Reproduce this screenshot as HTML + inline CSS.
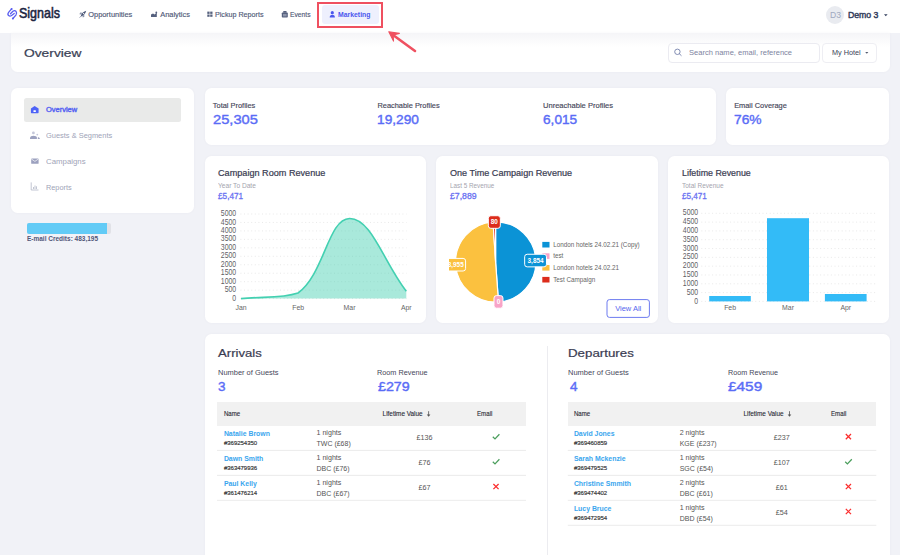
<!DOCTYPE html>
<html><head><meta charset="utf-8"><title>Signals - Marketing Overview</title>
<style>
*{box-sizing:border-box;margin:0;padding:0}
html,body{width:900px;height:555px;overflow:hidden}
body{background:#f1f2f7;font-family:"Liberation Sans",sans-serif;position:relative}
.a{position:absolute}
.t{position:absolute;white-space:nowrap;line-height:1;transform-origin:0 0}
.card{position:absolute;background:#fff;border-radius:6.5px;box-shadow:0 0 3px rgba(40,40,80,0.035)}
svg{position:absolute;overflow:visible}
</style></head><body>

<div class="a" style="left:0;top:0;width:900px;height:33px;background:#fff"></div>
<div class="card" style="left:11px;top:33px;width:879px;height:39px;border-radius:0 0 6.5px 6.5px;background:linear-gradient(#f5f5f8,#fff 14px)"></div>
<div class="a" style="left:668px;top:42.5px;width:151.5px;height:20px;border:1px solid #ebebf1;border-radius:4px;background:#fff"></div>
<div class="a" style="left:822px;top:42.5px;width:54.5px;height:20px;border:1px solid #eeeef3;border-radius:4px;background:#fff"></div>
<div class="a" style="left:317px;top:2px;width:66px;height:26px;border:2px solid #ef5060"></div>
<div class="a" style="left:826px;top:6px;width:18px;height:18px;border-radius:50%;background:#e9ebf0"></div>
<div class="a" style="left:322px;top:5.3px;width:57px;height:18.7px;background:#eef0fd;border-radius:3px"></div>

<div class="card" style="left:11px;top:88px;width:183px;height:125px"></div>
<div class="a" style="left:24px;top:98.3px;width:157px;height:23.4px;background:#e9eae9;border-radius:2.5px"></div>
<div class="a" style="left:27px;top:223.4px;width:83.7px;height:10.2px;background:#e1e2e7;border-radius:2px"></div>
<div class="a" style="left:27px;top:223.4px;width:80.3px;height:10.2px;background:#62cbf6;border-radius:2px 0 0 2px"></div>

<div class="card" style="left:205px;top:88px;width:510.6px;height:57.3px"></div>
<div class="card" style="left:726px;top:88px;width:163px;height:57.3px"></div>
<div class="card" style="left:205px;top:156px;width:221px;height:167px"></div>
<div class="card" style="left:436.2px;top:156px;width:221.8px;height:167px"></div>
<div class="card" style="left:668px;top:156px;width:221px;height:167px"></div>
<div class="card" style="left:205px;top:333.5px;width:685px;height:240px"></div>
<div class="a" style="left:546.5px;top:346px;width:1px;height:220px;background:#ececf0"></div>

<svg style="left:0;top:0" width="900" height="555" viewBox="0 0 900 555" font-family="Liberation Sans"><line x1="240.4" y1="214.00" x2="406.5" y2="214.00" stroke="#e3e3e3" stroke-width="0.8" stroke-dasharray="1 2.6"/><line x1="240.4" y1="222.46" x2="406.5" y2="222.46" stroke="#e3e3e3" stroke-width="0.8" stroke-dasharray="1 2.6"/><line x1="240.4" y1="230.92" x2="406.5" y2="230.92" stroke="#e3e3e3" stroke-width="0.8" stroke-dasharray="1 2.6"/><line x1="240.4" y1="239.38" x2="406.5" y2="239.38" stroke="#e3e3e3" stroke-width="0.8" stroke-dasharray="1 2.6"/><line x1="240.4" y1="247.84" x2="406.5" y2="247.84" stroke="#e3e3e3" stroke-width="0.8" stroke-dasharray="1 2.6"/><line x1="240.4" y1="256.30" x2="406.5" y2="256.30" stroke="#e3e3e3" stroke-width="0.8" stroke-dasharray="1 2.6"/><line x1="240.4" y1="264.76" x2="406.5" y2="264.76" stroke="#e3e3e3" stroke-width="0.8" stroke-dasharray="1 2.6"/><line x1="240.4" y1="273.22" x2="406.5" y2="273.22" stroke="#e3e3e3" stroke-width="0.8" stroke-dasharray="1 2.6"/><line x1="240.4" y1="281.68" x2="406.5" y2="281.68" stroke="#e3e3e3" stroke-width="0.8" stroke-dasharray="1 2.6"/><line x1="240.4" y1="290.14" x2="406.5" y2="290.14" stroke="#e3e3e3" stroke-width="0.8" stroke-dasharray="1 2.6"/><line x1="240.4" y1="298.60" x2="406.5" y2="298.60" stroke="#e3e3e3" stroke-width="0.8" stroke-dasharray="1 2.6"/><text x="236.2" y="216.10" text-anchor="end" font-size="8.5" fill="#5f5f66" textLength="15.40" lengthAdjust="spacingAndGlyphs">5000</text><text x="236.2" y="224.56" text-anchor="end" font-size="8.5" fill="#5f5f66" textLength="15.40" lengthAdjust="spacingAndGlyphs">4500</text><text x="236.2" y="233.02" text-anchor="end" font-size="8.5" fill="#5f5f66" textLength="15.40" lengthAdjust="spacingAndGlyphs">4000</text><text x="236.2" y="241.48" text-anchor="end" font-size="8.5" fill="#5f5f66" textLength="15.40" lengthAdjust="spacingAndGlyphs">3500</text><text x="236.2" y="249.94" text-anchor="end" font-size="8.5" fill="#5f5f66" textLength="15.40" lengthAdjust="spacingAndGlyphs">3000</text><text x="236.2" y="258.40" text-anchor="end" font-size="8.5" fill="#5f5f66" textLength="15.40" lengthAdjust="spacingAndGlyphs">2500</text><text x="236.2" y="266.86" text-anchor="end" font-size="8.5" fill="#5f5f66" textLength="15.40" lengthAdjust="spacingAndGlyphs">2000</text><text x="236.2" y="275.32" text-anchor="end" font-size="8.5" fill="#5f5f66" textLength="15.40" lengthAdjust="spacingAndGlyphs">1500</text><text x="236.2" y="283.78" text-anchor="end" font-size="8.5" fill="#5f5f66" textLength="15.40" lengthAdjust="spacingAndGlyphs">1000</text><text x="236.2" y="292.24" text-anchor="end" font-size="8.5" fill="#5f5f66" textLength="11.55" lengthAdjust="spacingAndGlyphs">500</text><text x="236.2" y="300.70" text-anchor="end" font-size="8.5" fill="#5f5f66" textLength="3.85" lengthAdjust="spacingAndGlyphs">0</text><path d="M241,298.6 C263.8,296.4 281.2,298.6 298,293 C324.6,273.4 328.1,218.9 349.5,218.5 C371.4,218.1 383.6,262.1 406.3,291.2 L406.3,298.6 L241,298.6 Z" fill="rgba(67,208,177,0.46)"/><path d="M241,298.6 C263.8,296.4 281.2,298.6 298,293 C324.6,273.4 328.1,218.9 349.5,218.5 C371.4,218.1 383.6,262.1 406.3,291.2" fill="none" stroke="#43d0b1" stroke-width="1.6"/><text x="241" y="309.8" text-anchor="middle" font-size="6.9" fill="#666">Jan</text><text x="298.2" y="309.8" text-anchor="middle" font-size="6.9" fill="#666">Feb</text><text x="349.5" y="309.8" text-anchor="middle" font-size="6.9" fill="#666">Mar</text><text x="406.3" y="309.8" text-anchor="middle" font-size="6.9" fill="#666">Apr</text><line x1="701.3" y1="213.30" x2="875.5" y2="213.30" stroke="#e3e3e3" stroke-width="0.8" stroke-dasharray="1 2.6"/><line x1="701.3" y1="222.11" x2="875.5" y2="222.11" stroke="#e3e3e3" stroke-width="0.8" stroke-dasharray="1 2.6"/><line x1="701.3" y1="230.92" x2="875.5" y2="230.92" stroke="#e3e3e3" stroke-width="0.8" stroke-dasharray="1 2.6"/><line x1="701.3" y1="239.73" x2="875.5" y2="239.73" stroke="#e3e3e3" stroke-width="0.8" stroke-dasharray="1 2.6"/><line x1="701.3" y1="248.54" x2="875.5" y2="248.54" stroke="#e3e3e3" stroke-width="0.8" stroke-dasharray="1 2.6"/><line x1="701.3" y1="257.35" x2="875.5" y2="257.35" stroke="#e3e3e3" stroke-width="0.8" stroke-dasharray="1 2.6"/><line x1="701.3" y1="266.16" x2="875.5" y2="266.16" stroke="#e3e3e3" stroke-width="0.8" stroke-dasharray="1 2.6"/><line x1="701.3" y1="274.97" x2="875.5" y2="274.97" stroke="#e3e3e3" stroke-width="0.8" stroke-dasharray="1 2.6"/><line x1="701.3" y1="283.78" x2="875.5" y2="283.78" stroke="#e3e3e3" stroke-width="0.8" stroke-dasharray="1 2.6"/><line x1="701.3" y1="292.59" x2="875.5" y2="292.59" stroke="#e3e3e3" stroke-width="0.8" stroke-dasharray="1 2.6"/><line x1="701.3" y1="301.40" x2="875.5" y2="301.40" stroke="#e3e3e3" stroke-width="0.8" stroke-dasharray="1 2.6"/><text x="698.2" y="215.40" text-anchor="end" font-size="8.5" fill="#5f5f66" textLength="15.40" lengthAdjust="spacingAndGlyphs">5000</text><text x="698.2" y="224.21" text-anchor="end" font-size="8.5" fill="#5f5f66" textLength="15.40" lengthAdjust="spacingAndGlyphs">4500</text><text x="698.2" y="233.02" text-anchor="end" font-size="8.5" fill="#5f5f66" textLength="15.40" lengthAdjust="spacingAndGlyphs">4000</text><text x="698.2" y="241.83" text-anchor="end" font-size="8.5" fill="#5f5f66" textLength="15.40" lengthAdjust="spacingAndGlyphs">3500</text><text x="698.2" y="250.64" text-anchor="end" font-size="8.5" fill="#5f5f66" textLength="15.40" lengthAdjust="spacingAndGlyphs">3000</text><text x="698.2" y="259.45" text-anchor="end" font-size="8.5" fill="#5f5f66" textLength="15.40" lengthAdjust="spacingAndGlyphs">2500</text><text x="698.2" y="268.26" text-anchor="end" font-size="8.5" fill="#5f5f66" textLength="15.40" lengthAdjust="spacingAndGlyphs">2000</text><text x="698.2" y="277.07" text-anchor="end" font-size="8.5" fill="#5f5f66" textLength="15.40" lengthAdjust="spacingAndGlyphs">1500</text><text x="698.2" y="285.88" text-anchor="end" font-size="8.5" fill="#5f5f66" textLength="15.40" lengthAdjust="spacingAndGlyphs">1000</text><text x="698.2" y="294.69" text-anchor="end" font-size="8.5" fill="#5f5f66" textLength="11.55" lengthAdjust="spacingAndGlyphs">500</text><text x="698.2" y="303.50" text-anchor="end" font-size="8.5" fill="#5f5f66" textLength="3.85" lengthAdjust="spacingAndGlyphs">0</text><rect x="709.2" y="296" width="41.6" height="5.4" fill="#33bbf7"/><rect x="767" y="218.2" width="42.0" height="83.2" fill="#33bbf7"/><rect x="824.9" y="294" width="41.7" height="7.4" fill="#33bbf7"/><text x="730.1" y="309.8" text-anchor="middle" font-size="6.9" fill="#666">Feb</text><text x="788" y="309.8" text-anchor="middle" font-size="6.9" fill="#666">Mar</text><text x="845.8" y="309.8" text-anchor="middle" font-size="6.9" fill="#666">Apr</text><path d="M495.6,262.0 L495.60,221.80 A40.2,40.2 0 0 1 498.50,302.10 Z" fill="#0b93d6" stroke="#fff" stroke-width="1.2" stroke-linejoin="round"/><path d="M495.6,262.0 L498.50,302.10 A40.2,40.2 0 1 1 493.04,221.88 Z" fill="#fbc13f" stroke="#fff" stroke-width="1.2" stroke-linejoin="round"/><path d="M495.6,262.0 L493.04,221.88 A40.2,40.2 0 0 1 495.60,221.80 Z" fill="#dc2c1b" stroke="#fff" stroke-width="1.2" stroke-linejoin="round"/><rect x="542.3" y="241.9" width="7.2" height="5.6" fill="#0b93d6"/><text x="553.2" y="247.0" font-size="6.3" fill="#666">London hotels 24.02.21 (Copy)</text><rect x="542.3" y="253.3" width="7.2" height="5.6" fill="#f8a3c7"/><text x="553.2" y="258.4" font-size="6.3" fill="#666">test</text><rect x="542.3" y="265.0" width="7.2" height="5.6" fill="#fbc13f"/><text x="553.2" y="270.1" font-size="6.3" fill="#666">London hotels 24.02.21</text><rect x="542.3" y="276.9" width="7.2" height="5.6" fill="#dc2c1b"/><text x="553.2" y="282.0" font-size="6.3" fill="#666">Test Campaign</text><defs><clipPath id="pc"><rect x="449" y="150" width="220" height="200"/></clipPath></defs><g clip-path="url(#pc)"><rect x="524.67" y="254.26" width="21.8" height="12.6" rx="2.5" fill="#0b93d6" stroke="#fff" stroke-width="1"/><text x="535.57" y="262.86" text-anchor="middle" font-size="6.4" font-weight="bold" fill="#fff">3,854</text><rect x="493.98" y="295.60" width="9" height="12.6" rx="2.5" fill="#f8a3c7" stroke="#fff" stroke-width="1"/><text x="498.48" y="304.20" text-anchor="middle" font-size="6.4" font-weight="bold" fill="#fff">0</text><rect x="445.79" y="258.41" width="19.8" height="12.6" rx="2.5" fill="#fbc13f" stroke="#fff" stroke-width="1"/><text x="455.69" y="267.01" text-anchor="middle" font-size="6.4" font-weight="bold" fill="#fff">3,955</text><rect x="488.33" y="215.72" width="12" height="12.6" rx="2.5" fill="#dc2c1b" stroke="#fff" stroke-width="1"/><text x="494.33" y="224.32" text-anchor="middle" font-size="6.4" font-weight="bold" fill="#fff">80</text></g><rect x="607" y="299.6" width="42.4" height="17.8" rx="2.5" fill="#fff" stroke="#6d7bf0" stroke-width="1"/><text x="628.2" y="311" text-anchor="middle" font-size="7.5" fill="#5565ee">View All</text></svg>
<div class="a" style="left:217px;top:402.2px;width:309px;height:23.6px;background:#f1f1f1"></div><svg style="left:0;top:0" width="900" height="555" viewBox="0 0 900 555" font-family="Liberation Sans"><text x="223.9" y="415.8" font-size="6.7" fill="#2a2a35" stroke="#2a2a35" stroke-width="0.12" lengthAdjust="spacingAndGlyphs" textLength="16.3">Name</text><text x="382.6" y="415.8" font-size="6.7" fill="#2a2a35" stroke="#2a2a35" stroke-width="0.12" lengthAdjust="spacingAndGlyphs" textLength="40">Lifetime Value</text><path d="M428.6 411.2 L428.6 416" stroke="#555" stroke-width="0.8" fill="none"/><path d="M426.8 414.4 L428.6 416.8 L430.40000000000003 414.4 Z" fill="#555"/><text x="477" y="415.8" font-size="6.7" fill="#2a2a35" stroke="#2a2a35" stroke-width="0.12" lengthAdjust="spacingAndGlyphs" textLength="15.4">Email</text><line x1="217" y1="450.40" x2="526" y2="450.40" stroke="#e6e6e6" stroke-width="0.8"/><text x="223.9" y="436.10" font-size="6.9" font-weight="bold" fill="#3aa6ee">Natalie Brown</text><text x="223.9" y="445.00" font-size="6.1" fill="#333" stroke="#333" stroke-width="0.16" textLength="33.3" lengthAdjust="spacingAndGlyphs">#369254350</text><text x="316.5" y="435.10" font-size="7.1" fill="#555">1 nights</text><text x="316.5" y="445.60" font-size="7.0" fill="#555">TWC (£68)</text><text x="424.6" y="440.20" text-anchor="middle" font-size="7.2" fill="#555">£136</text><path d="M492.8 436.8 L495 438.90000000000003 L499.4 434.3" stroke="#4a9e5c" stroke-width="1.25" fill="none"/><line x1="217" y1="475.37" x2="526" y2="475.37" stroke="#e6e6e6" stroke-width="0.8"/><text x="223.9" y="461.07" font-size="6.9" font-weight="bold" fill="#3aa6ee">Dawn Smith</text><text x="223.9" y="469.97" font-size="6.1" fill="#333" stroke="#333" stroke-width="0.16" textLength="33.3" lengthAdjust="spacingAndGlyphs">#363479936</text><text x="316.5" y="460.07" font-size="7.1" fill="#555">1 nights</text><text x="316.5" y="470.57" font-size="7.0" fill="#555">DBC (£76)</text><text x="424.6" y="465.17" text-anchor="middle" font-size="7.2" fill="#555">£76</text><path d="M492.8 461.77 L495 463.87 L499.4 459.27" stroke="#4a9e5c" stroke-width="1.25" fill="none"/><line x1="217" y1="500.34" x2="526" y2="500.34" stroke="#e6e6e6" stroke-width="0.8"/><text x="223.9" y="486.04" font-size="6.9" font-weight="bold" fill="#3aa6ee">Paul Kelly</text><text x="223.9" y="494.94" font-size="6.1" fill="#333" stroke="#333" stroke-width="0.16" textLength="33.3" lengthAdjust="spacingAndGlyphs">#361476214</text><text x="316.5" y="485.04" font-size="7.1" fill="#555">1 nights</text><text x="316.5" y="495.54" font-size="7.0" fill="#555">DBC (£67)</text><text x="424.6" y="490.14" text-anchor="middle" font-size="7.2" fill="#555">£67</text><path d="M493.4 483.94 L498.6 489.14000000000004 M498.6 483.94 L493.4 489.14000000000004" stroke="#fb2d2d" stroke-width="1.25" fill="none"/></svg><div class="a" style="left:567.8px;top:402.2px;width:308.5px;height:23.6px;background:#f1f1f1"></div><svg style="left:0;top:0" width="900" height="555" viewBox="0 0 900 555" font-family="Liberation Sans"><text x="573.9" y="415.8" font-size="6.7" fill="#2a2a35" stroke="#2a2a35" stroke-width="0.12" lengthAdjust="spacingAndGlyphs" textLength="16.3">Name</text><text x="743.5" y="415.8" font-size="6.7" fill="#2a2a35" stroke="#2a2a35" stroke-width="0.12" lengthAdjust="spacingAndGlyphs" textLength="40">Lifetime Value</text><path d="M789.5 411.2 L789.5 416" stroke="#555" stroke-width="0.8" fill="none"/><path d="M787.7 414.4 L789.5 416.8 L791.3 414.4 Z" fill="#555"/><text x="831" y="415.8" font-size="6.7" fill="#2a2a35" stroke="#2a2a35" stroke-width="0.12" lengthAdjust="spacingAndGlyphs" textLength="15.4">Email</text><line x1="567.8" y1="450.40" x2="876.3" y2="450.40" stroke="#e6e6e6" stroke-width="0.8"/><text x="573.9" y="436.10" font-size="6.9" font-weight="bold" fill="#3aa6ee">David Jones</text><text x="573.9" y="445.00" font-size="6.1" fill="#333" stroke="#333" stroke-width="0.16" textLength="33.3" lengthAdjust="spacingAndGlyphs">#369460859</text><text x="679.7" y="435.10" font-size="7.1" fill="#555">2 nights</text><text x="679.7" y="445.60" font-size="7.0" fill="#555">KGE (£237)</text><text x="781.8" y="440.20" text-anchor="middle" font-size="7.2" fill="#555">£237</text><path d="M845.8 434.0 L851.0 439.20000000000005 M851.0 434.0 L845.8 439.20000000000005" stroke="#fb2d2d" stroke-width="1.25" fill="none"/><line x1="567.8" y1="475.37" x2="876.3" y2="475.37" stroke="#e6e6e6" stroke-width="0.8"/><text x="573.9" y="461.07" font-size="6.9" font-weight="bold" fill="#3aa6ee">Sarah Mckenzie</text><text x="573.9" y="469.97" font-size="6.1" fill="#333" stroke="#333" stroke-width="0.16" textLength="33.3" lengthAdjust="spacingAndGlyphs">#369479525</text><text x="679.7" y="460.07" font-size="7.1" fill="#555">1 nights</text><text x="679.7" y="470.57" font-size="7.0" fill="#555">SGC (£54)</text><text x="781.8" y="465.17" text-anchor="middle" font-size="7.2" fill="#555">£107</text><path d="M845.1999999999999 461.77 L847.4 463.87 L851.8 459.27" stroke="#4a9e5c" stroke-width="1.25" fill="none"/><line x1="567.8" y1="500.34" x2="876.3" y2="500.34" stroke="#e6e6e6" stroke-width="0.8"/><text x="573.9" y="486.04" font-size="6.9" font-weight="bold" fill="#3aa6ee">Christine Smmith</text><text x="573.9" y="494.94" font-size="6.1" fill="#333" stroke="#333" stroke-width="0.16" textLength="33.3" lengthAdjust="spacingAndGlyphs">#369474402</text><text x="679.7" y="485.04" font-size="7.1" fill="#555">2 nights</text><text x="679.7" y="495.54" font-size="7.0" fill="#555">DBC (£61)</text><text x="781.8" y="490.14" text-anchor="middle" font-size="7.2" fill="#555">£61</text><path d="M845.8 483.94 L851.0 489.14000000000004 M851.0 483.94 L845.8 489.14000000000004" stroke="#fb2d2d" stroke-width="1.25" fill="none"/><line x1="567.8" y1="525.31" x2="876.3" y2="525.31" stroke="#e6e6e6" stroke-width="0.8"/><text x="573.9" y="511.01" font-size="6.9" font-weight="bold" fill="#3aa6ee">Lucy Bruce</text><text x="573.9" y="519.91" font-size="6.1" fill="#333" stroke="#333" stroke-width="0.16" textLength="33.3" lengthAdjust="spacingAndGlyphs">#369472954</text><text x="679.7" y="510.01" font-size="7.1" fill="#555">1 nights</text><text x="679.7" y="520.51" font-size="7.0" fill="#555">DBD (£54)</text><text x="781.8" y="515.11" text-anchor="middle" font-size="7.2" fill="#555">£54</text><path d="M845.8 508.91 L851.0 514.11 M851.0 508.91 L845.8 514.11" stroke="#fb2d2d" stroke-width="1.25" fill="none"/></svg>

<svg style="left:0;top:0" width="900" height="555" viewBox="0 0 900 555">
 <!-- logo -->
 <path d="M11.6,8.9 L8.6,12.3 Q7.2,14.2 8.6,15.6 Q9.9,16.8 11.6,15.5 L14.2,13.5" stroke="#5a5ef0" stroke-width="1.3" fill="none" stroke-linecap="round"/>
 <path d="M12.9,18.5 L15.9,15.1 Q17.3,13.2 15.9,11.2 Q14.6,10 12.9,11.3 L10.5,13.7" stroke="#5a5ef0" stroke-width="1.3" fill="none" stroke-linecap="round"/>
 <circle cx="11.6" cy="8.9" r="1" fill="#5a5ef0"/><circle cx="12.9" cy="18.5" r="1" fill="#5a5ef0"/>
 <!-- arrow -->
 <path d="M415 51 L392 34.2" stroke="#ef5060" stroke-width="2.6" stroke-linecap="round"/>
 <path d="M388.8 31.8 L399.4 33.4 L393.2 35 L393.5 41.1 Z" fill="#ef5060" stroke="#ef5060" stroke-width="1.1" stroke-linejoin="round"/>
 <!-- search icon -->
 <circle cx="677.4" cy="51.8" r="2.7" stroke="#7480aa" stroke-width="0.9" fill="none"/>
 <path d="M679.4 53.8 L681.2 55.5" stroke="#7480aa" stroke-width="0.9" stroke-linecap="round"/>
 <!-- carets -->
 <path d="M865.2 52 L868.4 52 L866.8 53.8Z" fill="#555b70"/>
 <path d="M884 14.2 L887.6 14.2 L885.8 16.2Z" fill="#34405e"/>
 <!-- nav icons -->
 <g fill="#56617e">
  <rect x="207.3" y="11.6" width="2.3" height="2.3"/><rect x="210.2" y="11.6" width="2.3" height="2.3"/>
  <rect x="207.3" y="14.5" width="2.3" height="2.3"/><rect x="210.2" y="14.5" width="2.3" height="2.3"/>
  <rect x="281.8" y="12.4" width="6" height="5.2" rx="0.8"/>
  <rect x="283.2" y="11" width="3.4" height="1.8" rx="0.5"/>
  <path d="M151 14.6 L153 13.6 L154.6 14.4 L156.8 12.6 L156.8 17 L151 17 Z"/>
  <circle cx="156.3" cy="12.5" r="0.9"/>
 </g>
 <rect x="283" y="14" width="3.6" height="2.4" fill="#8d95ab"/>
 <path d="M80.8 16.6 Q81.2 12.4 86.2 10.8 Q84.9 15.6 80.8 16.6 Z" fill="#4a5676"/>
 <path d="M82.2 12.8 L80.2 12.6 L79.4 14.2 L81.4 14.6 M84.2 14.8 L84.4 16.8 L82.8 17.6 L82.4 15.6" fill="#8a93ab"/>
 <path d="M79.6 17.6 L81.2 16" stroke="#8a93ab" stroke-width="0.9"/>
 <circle cx="83.6" cy="13.6" r="0.7" fill="#fff"/>
 <!-- marketing user icon -->
 <circle cx="332.3" cy="12.7" r="1.6" fill="#4b57ee"/>
 <path d="M329.7 17.6 Q329.7 14.8 332.3 14.8 Q334.9 14.8 334.9 17.6 Z" fill="#4b57ee"/>
 <!-- sidebar icons -->
 <path d="M30.9 108.6 L34.6 106.1 L38.6 108.6 L38.6 112.6 Q38.6 113.2 38 113.2 L31.5 113.2 Q30.9 113.2 30.9 112.6 Z" fill="#4e63f7"/>
 <rect x="33.4" y="110.3" width="2.5" height="1.6" rx="0.4" fill="#fff"/>
 <g fill="#9ca1bf">
  <circle cx="33.4" cy="132.9" r="1.4" fill="#c5c8da"/>
  <path d="M30 138.9 L30 137.6 Q30.3 135.8 33.4 135.8 Q36.6 135.8 36.9 137.6 L36.9 138.9 Z"/>
  <circle cx="37.3" cy="134.6" r="0.9" fill="#c5c8da"/>
  <path d="M37.8 138.9 L37.8 137.5 Q38.8 137 39.8 138.4 L39.8 138.9 Z"/>
  <rect x="31.2" y="158.4" width="7.4" height="5.4" rx="0.6"/>
 </g>
 <path d="M31.4 159 L34.9 161.4 L38.4 159" stroke="#fff" stroke-width="0.7" fill="none"/>
 <path d="M31.2 182.4 L31.2 190 L38.5 190" stroke="#b3b7c8" stroke-width="0.8" fill="none"/>
 <path d="M33.5 189 L33.5 187 M35 189 L35 185.5 M36.5 189 L36.5 186.3" stroke="#b3b7c8" stroke-width="0.8"/>
</svg>

<div class="t" id="t0" style="left:19.35px;top:6px;font-size:14.10px;color:#1c2541;transform:scaleX(0.887);-webkit-text-stroke:0.55px #1c2541;">Signals</div>
<div class="t" id="t1" style="left:88.25px;top:11px;font-size:7.41px;color:#4f5977;-webkit-text-stroke:0.15px #4f5977;">Opportunities</div>
<div class="t" id="t2" style="left:160.25px;top:11px;font-size:7.41px;color:#4f5977;-webkit-text-stroke:0.15px #4f5977;">Analytics</div>
<div class="t" id="t3" style="left:215.25px;top:11px;font-size:7.41px;color:#4f5977;transform:scaleX(0.965);-webkit-text-stroke:0.15px #4f5977;">Pickup Reports</div>
<div class="t" id="t4" style="left:290.25px;top:11px;font-size:7.41px;color:#4f5977;transform:scaleX(0.905);-webkit-text-stroke:0.15px #4f5977;">Events</div>
<div class="t" id="t5" style="left:338.25px;top:11px;font-size:7.41px;font-weight:bold;color:#4b57ee;transform:scaleX(0.928);">Marketing</div>
<div class="t" id="t6" style="left:830.25px;top:10px;font-size:9.45px;color:#9ea9bf;transform:scaleX(0.911);">D3</div>
<div class="t" id="t7" style="left:848.25px;top:11px;font-size:8.87px;color:#34405e;transform:scaleX(0.982);-webkit-text-stroke:0.45px #34405e;">Demo 3</div>
<div class="t" id="t8" style="left:24.25px;top:49px;font-size:10.32px;color:#3a3f55;transform:scaleX(1.337);-webkit-text-stroke:0.2px #3a3f55;">Overview</div>
<div class="t" id="t9" style="left:689.25px;top:50px;font-size:6.69px;color:#7d84a0;transform:scaleX(1.127);">Search name, email, reference</div>
<div class="t" id="t10" style="left:832.05px;top:50px;font-size:6.54px;color:#3b3f57;transform:scaleX(1.112);">My Hotel</div>
<div class="t" id="t11" style="left:45.85px;top:107px;font-size:6.54px;color:#5563f2;transform:scaleX(1.145);-webkit-text-stroke:0.35px #5563f2;">Overview</div>
<div class="t" id="t12" style="left:45.85px;top:132px;font-size:7.27px;color:#a0a4b8;transform:scaleX(1.024);">Guests &amp; Segments</div>
<div class="t" id="t13" style="left:45.85px;top:159px;font-size:7.12px;color:#a0a4b8;transform:scaleX(1.102);">Campaigns</div>
<div class="t" id="t14" style="left:45.85px;top:184px;font-size:7.41px;color:#a0a4b8;transform:scaleX(0.986);">Reports</div>
<div class="t" id="t15" style="left:27.25px;top:235px;font-size:6.98px;font-weight:bold;color:#505678;transform:scaleX(0.931);">E-mail Credits: 483,195</div>
<div class="t" id="t16" style="left:212.85px;top:102px;font-size:7.41px;color:#46475a;-webkit-text-stroke:0.15px #46475a;">Total Profiles</div>
<div class="t" id="t17" style="left:212.85px;top:113px;font-size:13.23px;color:#5a6cf6;transform:scaleX(1.110);-webkit-text-stroke:0.4px #5a6cf6;">25,305</div>
<div class="t" id="t18" style="left:377.45px;top:102px;font-size:7.41px;color:#46475a;-webkit-text-stroke:0.15px #46475a;">Reachable Profiles</div>
<div class="t" id="t19" style="left:377.45px;top:113px;font-size:13.23px;color:#5a6cf6;transform:scaleX(1.038);-webkit-text-stroke:0.4px #5a6cf6;">19,290</div>
<div class="t" id="t20" style="left:543.05px;top:102px;font-size:7.41px;color:#46475a;transform:scaleX(1.019);-webkit-text-stroke:0.15px #46475a;">Unreachable Profiles</div>
<div class="t" id="t21" style="left:543.05px;top:113px;font-size:13.23px;color:#5a6cf6;transform:scaleX(1.033);-webkit-text-stroke:0.4px #5a6cf6;">6,015</div>
<div class="t" id="t22" style="left:734.15px;top:102px;font-size:7.41px;color:#46475a;-webkit-text-stroke:0.15px #46475a;">Email Coverage</div>
<div class="t" id="t23" style="left:734.15px;top:113px;font-size:13.23px;color:#5a6cf6;transform:scaleX(1.043);-webkit-text-stroke:0.4px #5a6cf6;">76%</div>
<div class="t" id="t24" style="left:217.65px;top:169px;font-size:8.43px;color:#3a3c52;transform:scaleX(1.082);-webkit-text-stroke:0.2px #3a3c52;">Campaign Room Revenue</div>
<div class="t" id="t25" style="left:217.65px;top:182px;font-size:6.98px;color:#a4a4ae;transform:scaleX(0.949);">Year To Date</div>
<div class="t" id="t26" style="left:217.65px;top:192px;font-size:9.01px;color:#6a72f2;transform:scaleX(0.914);-webkit-text-stroke:0.3px #6a72f2;">£5,471</div>
<div class="t" id="t27" style="left:449.85px;top:170px;font-size:8.28px;color:#3a3c52;transform:scaleX(1.098);-webkit-text-stroke:0.2px #3a3c52;">One Time Campaign Revenue</div>
<div class="t" id="t28" style="left:449.85px;top:182px;font-size:6.98px;color:#a4a4ae;transform:scaleX(0.906);">Last 5 Revenue</div>
<div class="t" id="t29" style="left:450.35px;top:192px;font-size:9.01px;color:#6a72f2;transform:scaleX(0.969);-webkit-text-stroke:0.3px #6a72f2;">£7,889</div>
<div class="t" id="t30" style="left:681.85px;top:170px;font-size:8.28px;color:#3a3c52;transform:scaleX(1.069);-webkit-text-stroke:0.2px #3a3c52;">Lifetime Revenue</div>
<div class="t" id="t31" style="left:681.85px;top:182px;font-size:6.98px;color:#a4a4ae;transform:scaleX(0.933);">Total Revenue</div>
<div class="t" id="t32" style="left:681.85px;top:192px;font-size:9.01px;color:#6a72f2;transform:scaleX(0.903);-webkit-text-stroke:0.3px #6a72f2;">£5,471</div>
<div class="t" id="t33" style="left:218.05px;top:348px;font-size:11.34px;color:#3a3c52;transform:scaleX(1.159);-webkit-text-stroke:0.2px #3a3c52;">Arrivals</div>
<div class="t" id="t34" style="left:218.05px;top:370px;font-size:6.40px;color:#46475a;transform:scaleX(1.168);">Number of Guests</div>
<div class="t" id="t35" style="left:218.05px;top:381px;font-size:12.94px;color:#5a6cf6;transform:scaleX(1.042);-webkit-text-stroke:0.4px #5a6cf6;">3</div>
<div class="t" id="t36" style="left:377.15px;top:370px;font-size:6.40px;color:#46475a;transform:scaleX(1.139);">Room Revenue</div>
<div class="t" id="t37" style="left:378.05px;top:380px;font-size:13.08px;color:#5a6cf6;transform:scaleX(1.089);-webkit-text-stroke:0.4px #5a6cf6;">£279</div>
<div class="t" id="t38" style="left:567.75px;top:348px;font-size:11.34px;color:#3a3c52;transform:scaleX(1.175);-webkit-text-stroke:0.2px #3a3c52;">Departures</div>
<div class="t" id="t39" style="left:567.75px;top:370px;font-size:6.40px;color:#46475a;transform:scaleX(1.172);">Number of Guests</div>
<div class="t" id="t40" style="left:569.55px;top:381px;font-size:12.94px;color:#5a6cf6;transform:scaleX(1.042);-webkit-text-stroke:0.4px #5a6cf6;">4</div>
<div class="t" id="t41" style="left:727.75px;top:370px;font-size:6.40px;color:#46475a;transform:scaleX(1.127);">Room Revenue</div>
<div class="t" id="t42" style="left:728.25px;top:380px;font-size:13.08px;color:#5a6cf6;transform:scaleX(1.175);-webkit-text-stroke:0.4px #5a6cf6;">£459</div>

</body></html>
